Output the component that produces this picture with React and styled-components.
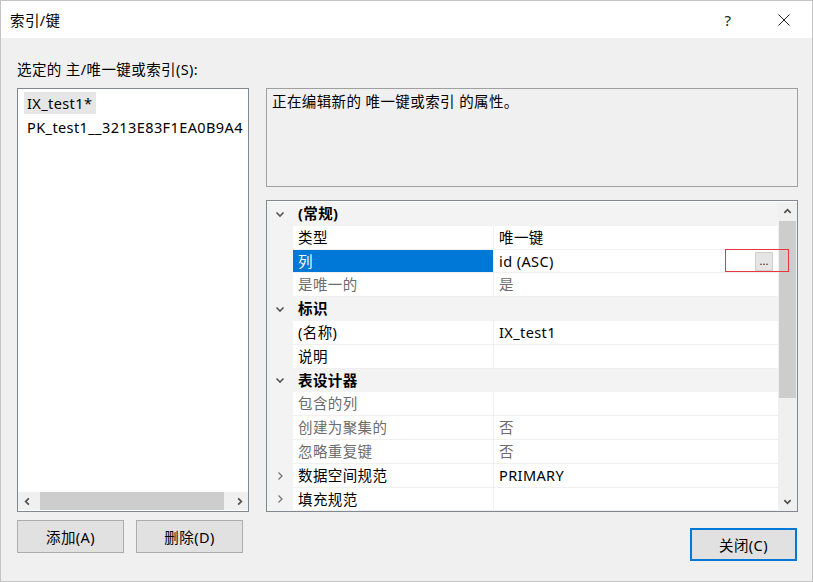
import React from "react";
import styled, { createGlobalStyle } from "styled-components";

const Global = createGlobalStyle`
  html, body {
    margin: 0;
    padding: 0;
    background: #f0f0f0;
  }
  body {
    font-family: "Noto Sans", "Noto Sans CJK SC", sans-serif;
    font-size: 14.5px;
    letter-spacing: 0.4px;
    color: #000;
  }
`;

const Dialog = styled.div`
  width: 813px;
  height: 582px;
  box-sizing: border-box;
  border: 1px solid #c4c4c4;
  background: #f0f0f0;
  display: flex;
  flex-direction: column;
`;

const TitleBar = styled.div`
  height: 37px;
  background: #fff;
  display: flex;
  align-items: center;
  padding-left: 9px;
  flex-shrink: 0;
`;

const Title = styled.div`
  flex: 1;
  line-height: 18px;
`;

const TitleButton = styled.div`
  width: 56px;
  height: 37px;
  display: flex;
  align-items: center;
  justify-content: center;
  font-size: 15px;
  color: #222;
`;

const Body = styled.div`
  flex: 1;
  display: flex;
  flex-direction: column;
  padding: 22px 15px 0 16px;
`;

const Label = styled.div`
  line-height: 18px;
  height: 18px;
  margin-bottom: 10px;
`;

const Main = styled.div`
  display: grid;
  grid-template-columns: 232px 532px;
  column-gap: 17px;
  height: 417px;
`;

const ListBox = styled.div`
  box-sizing: border-box;
  border: 1px solid #828790;
  background: #fff;
  display: flex;
  flex-direction: column;
  padding-top: 3px;
`;

const ListItems = styled.div`
  flex: 1;
  padding-left: 6px;
  overflow: hidden;
`;

const ListItem = styled.div`
  display: inline-block;
  white-space: nowrap;
  line-height: 22px;
  height: 22px;
  padding: 0 4px 0 3px;
  margin-bottom: 2px;
  background: ${(p) => (p.$selected ? "#e6e6e6" : "transparent")};
`;

const HScroll = styled.div`
  height: 18px;
  background: #f0f0f0;
  display: flex;
  align-items: center;
  margin-bottom: 1px;
`;

const ArrowBox = styled.div`
  width: ${(p) => p.$size || 18}px;
  height: ${(p) => p.$size || 18}px;
  display: flex;
  align-items: center;
  justify-content: center;
  flex-shrink: 0;
`;

const HThumb = styled.div`
  flex: 1;
  height: 18px;
  background: #cdcdcd;
  margin: 0 6px 0 4px;
`;

const RightCol = styled.div`
  display: flex;
  flex-direction: column;
  gap: 13px;
`;

const DescBox = styled.div`
  box-sizing: border-box;
  height: 99px;
  border: 1px solid #a0a0a0;
  background: #f0f0f0;
  padding: 3px 5px;
  line-height: 18px;
`;

const PropGrid = styled.div`
  position: relative;
  flex: 1;
  box-sizing: border-box;
  border: 1px solid #828790;
  background: #fff;
  display: flex;
  padding-top: 1px;
`;

const Rows = styled.div`
  flex: 1;
  overflow: hidden;
`;

const Row = styled.div`
  display: grid;
  grid-template-columns: 26px 200px 1fr;
  height: 23.8px;
  line-height: 23px;
  background: ${(p) => (p.$category ? "#f3f3f3" : "#fff")};
`;

const Gutter = styled.div`
  background: #f3f3f3;
  display: flex;
  align-items: center;
  justify-content: center;
  color: #555;
`;

const NameCell = styled.div`
  padding-left: 5px;
  white-space: nowrap;
  overflow: hidden;
  font-weight: ${(p) => (p.$bold ? 700 : 400)};
  color: ${(p) => (p.$selected ? "#fff" : p.$dim ? "#6d6d6d" : "#000")};
  background: ${(p) => (p.$selected ? "#0078d7" : "transparent")};
  border-bottom: 1px solid ${(p) => (p.$category ? "transparent" : "#f0f0f0")};
  box-sizing: border-box;
  ${(p) => (p.$category ? "grid-column: span 2;" : "")}
`;

const ValueCell = styled.div`
  padding-left: 5px;
  white-space: nowrap;
  overflow: hidden;
  color: ${(p) => (p.$dim ? "#6d6d6d" : "#000")};
  border-left: 1px solid #f0f0f0;
  border-bottom: 1px solid #f0f0f0;
  box-sizing: border-box;
`;

const VScroll = styled.div`
  width: 19px;
  background: #f0f0f0;
  display: flex;
  flex-direction: column;
  align-items: stretch;
`;

const VThumb = styled.div`
  height: 177px;
  background: #cdcdcd;
  margin: 0 1px;
`;

const VTrack = styled.div`
  flex: 1;
`;

const Highlight = styled.div`
  position: absolute;
  left: 458px;
  top: 48px;
  width: 64px;
  height: 23px;
  border: 1px solid #e8383d;
  box-sizing: border-box;
`;

const EllipsisButton = styled.div`
  position: absolute;
  left: 488px;
  top: 51px;
  width: 18px;
  height: 19px;
  background: #e5e5e5;
  border: 1px solid #cfcfcf;
  box-sizing: border-box;
  font-size: 11px;
  letter-spacing: 0;
  line-height: 15px;
  text-align: center;
  color: #222;
`;

const Footer = styled.div`
  display: flex;
  align-items: flex-start;
  margin-top: 15px;
`;

const Button = styled.button`
  width: 107px;
  height: 33px;
  box-sizing: border-box;
  background: #e1e1e1;
  border: ${(p) => (p.$default ? "2px solid #0078d7" : "1px solid #adadad")};
  font-family: inherit;
  font-size: 14.5px;
  letter-spacing: 0.4px;
  color: #000;
  padding: 0;
  margin-right: 12px;
  ${(p) => (p.$default ? "margin: 8px 0 0 auto;" : "")}
`;

const Chevron = ({ dir = "down", size = 10, color = "#555", w = 1.6 }) => (
  <svg width={size} height={size} viewBox="0 0 10 10">
    {dir === "down" && <polyline points="1.5,3.5 5,7 8.5,3.5" fill="none" stroke={color} strokeWidth={w} />}
    {dir === "up" && <polyline points="1.5,6.5 5,3 8.5,6.5" fill="none" stroke={color} strokeWidth={w} />}
    {dir === "right" && <polyline points="3.5,1.5 7,5 3.5,8.5" fill="none" stroke={color} strokeWidth={w} />}
    {dir === "left" && <polyline points="6.5,1.5 3,5 6.5,8.5" fill="none" stroke={color} strokeWidth={w} />}
  </svg>
);

const rows = [
  { cat: true, name: "(常规)" },
  { name: "类型", value: "唯一键" },
  { name: "列", value: "id (ASC)", selected: true },
  { name: "是唯一的", value: "是", dim: true },
  { cat: true, name: "标识" },
  { name: "(名称)", value: "IX_test1" },
  { name: "说明", value: "" },
  { cat: true, name: "表设计器" },
  { name: "包含的列", value: "", dim: true },
  { name: "创建为聚集的", value: "否", dim: true },
  { name: "忽略重复键", value: "否", dim: true },
  { name: "数据空间规范", value: "PRIMARY", expand: true },
  { name: "填充规范", value: "", expand: true },
];

export default function App() {
  return (
    <Dialog>
      <Global />
      <TitleBar>
        <Title>索引/键</Title>
        <TitleButton>?</TitleButton>
        <TitleButton>
          <svg width="12" height="12" viewBox="0 0 12 12">
            <line x1="0.5" y1="0.5" x2="11.5" y2="11.5" stroke="#222" strokeWidth="1" />
            <line x1="11.5" y1="0.5" x2="0.5" y2="11.5" stroke="#222" strokeWidth="1" />
          </svg>
        </TitleButton>
      </TitleBar>
      <Body>
        <Label>选定的 主/唯一键或索引(S):</Label>
        <Main>
          <ListBox>
            <ListItems>
              <ListItem $selected>IX_test1*</ListItem>
              <br />
              <ListItem>PK_test1__3213E83F1EA0B9A4</ListItem>
            </ListItems>
            <HScroll>
              <ArrowBox>
                <Chevron dir="left" size={9} color="#505050" w={1.9} />
              </ArrowBox>
              <HThumb />
              <ArrowBox>
                <Chevron dir="right" size={9} color="#505050" w={1.9} />
              </ArrowBox>
            </HScroll>
          </ListBox>
          <RightCol>
            <DescBox>正在编辑新的 唯一键或索引 的属性。</DescBox>
            <PropGrid>
              <Rows>
                {rows.map((r, i) =>
                  r.cat ? (
                    <Row key={i} $category>
                      <Gutter>
                        <Chevron dir="down" />
                      </Gutter>
                      <NameCell $category $bold>
                        {r.name}
                      </NameCell>
                    </Row>
                  ) : (
                    <Row key={i}>
                      <Gutter>{r.expand && <Chevron dir="right" color="#777" w={1.3} />}</Gutter>
                      <NameCell $selected={r.selected} $dim={r.dim}>
                        {r.name}
                      </NameCell>
                      <ValueCell $dim={r.dim}>{r.value}</ValueCell>
                    </Row>
                  )
                )}
              </Rows>
              <VScroll>
                <ArrowBox $size={19}>
                  <Chevron dir="up" size={9} color="#505050" w={1.9} />
                </ArrowBox>
                <VThumb />
                <VTrack />
                <ArrowBox $size={19}>
                  <Chevron dir="down" size={9} color="#505050" w={1.9} />
                </ArrowBox>
              </VScroll>
              <Highlight />
              <EllipsisButton>...</EllipsisButton>
            </PropGrid>
          </RightCol>
        </Main>
        <Footer>
          <Button>添加(A)</Button>
          <Button>删除(D)</Button>
          <Button $default>关闭(C)</Button>
        </Footer>
      </Body>
    </Dialog>
  );
}
